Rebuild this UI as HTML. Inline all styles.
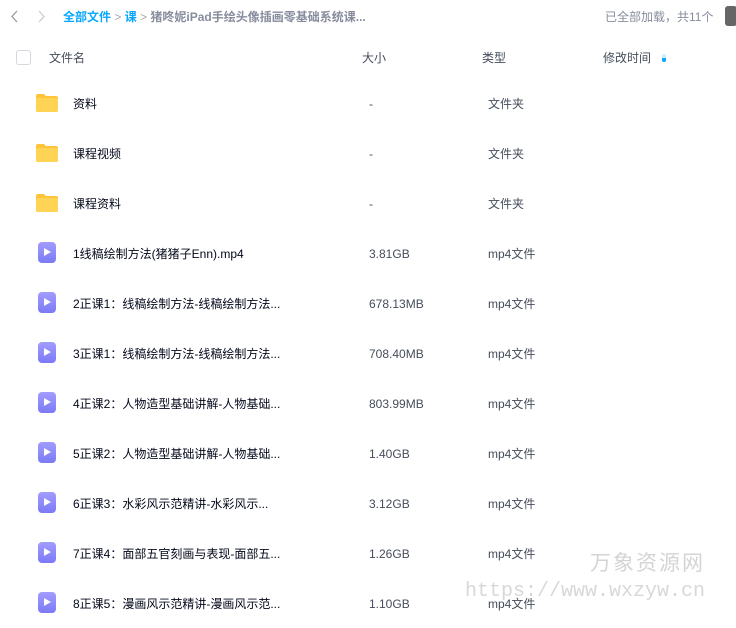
<!DOCTYPE html>
<html><head><meta charset="utf-8"><style>
body{margin:0;width:736px;height:624px;overflow:hidden;background:#fff;font-family:"Liberation Sans","Noto Sans CJK SC",sans-serif;font-size:12px;line-height:16px;color:#03081a;position:relative}
.a{position:absolute;white-space:nowrap}
.g{color:#878c9c}
.row{position:absolute;left:0;width:736px;height:50px}
.row .n{position:absolute;left:73px;top:18px;line-height:16px}
.row .s{position:absolute;left:369px;top:18px;color:#454d5a;line-height:16px}
.row .t{position:absolute;left:488px;top:18px;color:#454d5a;line-height:16px}
.fold{position:absolute;left:35px;top:15px;width:24px;height:20px}
.vid{position:absolute;left:38px;top:14px;width:18px;height:21px;border-radius:4px;background:linear-gradient(#a29cff,#7b7af5)}
.vid:after{content:"";position:absolute;left:6px;top:6px;border-left:7px solid #fff;border-top:4.5px solid transparent;border-bottom:4.5px solid transparent}
</style></head><body>
<svg class="a" style="left:10px;top:10px" width="8" height="13" viewBox="0 0 8 13"><path d="M7 1L2 6.5 7 12" fill="none" stroke="#999" stroke-width="1.3"/></svg>
<svg class="a" style="left:38px;top:10px" width="8" height="13" viewBox="0 0 8 13"><path d="M1 1l5 5.5L1 12" fill="none" stroke="#ccc" stroke-width="1.3"/></svg>
<div class="a" style="left:63px;top:9px;font-weight:bold;color:#06a7ff">全部文件 <span style="color:#aaa;font-weight:normal">&gt;</span> 课 <span style="color:#aaa;font-weight:normal">&gt;</span> <span style="color:#878c9c">猪咚妮iPad手绘头像插画零基础系统课...</span></div>
<div class="a g" style="left:605px;top:9px">已全部加载，共11个</div>
<div class="a" style="left:725px;top:6px;width:12px;height:20px;background:#666;border-radius:3px"></div>
<div class="a" style="left:16px;top:50px;width:13px;height:13px;border:1px solid #d4d7de;border-radius:3px"></div>
<div class="a" style="left:49px;top:50px;color:#454d5a">文件名</div>
<div class="a" style="left:362px;top:50px;color:#454d5a">大小</div>
<div class="a" style="left:482px;top:50px;color:#454d5a">类型</div>
<div class="a" style="left:603px;top:50px;color:#454d5a">修改时间</div>
<div class="a" style="left:662px;top:54px;width:4px;height:8px;background:linear-gradient(#cfe9ff 50%,#06a7ff 50%);border-radius:2px"></div>

<div class="row" style="top:78px"><svg class="fold" viewBox="0 0 24 20"><path d="M1 3a2 2 0 0 1 2-2h6l2 2h10a2 2 0 0 1 2 2v12a2 2 0 0 1-2 2H3a2 2 0 0 1-2-2z" fill="#ffc43b"/><rect x="1" y="5" width="22" height="14" rx="2" fill="#ffd354"/></svg><span class="n">资料</span><span class="s">-</span><span class="t">文件夹</span></div>
<div class="row" style="top:128px"><svg class="fold" viewBox="0 0 24 20"><path d="M1 3a2 2 0 0 1 2-2h6l2 2h10a2 2 0 0 1 2 2v12a2 2 0 0 1-2 2H3a2 2 0 0 1-2-2z" fill="#ffc43b"/><rect x="1" y="5" width="22" height="14" rx="2" fill="#ffd354"/></svg><span class="n">课程视频</span><span class="s">-</span><span class="t">文件夹</span></div>
<div class="row" style="top:178px"><svg class="fold" viewBox="0 0 24 20"><path d="M1 3a2 2 0 0 1 2-2h6l2 2h10a2 2 0 0 1 2 2v12a2 2 0 0 1-2 2H3a2 2 0 0 1-2-2z" fill="#ffc43b"/><rect x="1" y="5" width="22" height="14" rx="2" fill="#ffd354"/></svg><span class="n">课程资料</span><span class="s">-</span><span class="t">文件夹</span></div>
<div class="row" style="top:228px"><div class="vid"></div><span class="n">1线稿绘制方法(猪猪子Enn).mp4</span><span class="s">3.81GB</span><span class="t">mp4文件</span></div>
<div class="row" style="top:278px"><div class="vid"></div><span class="n">2正课1：线稿绘制方法-线稿绘制方法...</span><span class="s">678.13MB</span><span class="t">mp4文件</span></div>
<div class="row" style="top:328px"><div class="vid"></div><span class="n">3正课1：线稿绘制方法-线稿绘制方法...</span><span class="s">708.40MB</span><span class="t">mp4文件</span></div>
<div class="row" style="top:378px"><div class="vid"></div><span class="n">4正课2：人物造型基础讲解-人物基础...</span><span class="s">803.99MB</span><span class="t">mp4文件</span></div>
<div class="row" style="top:428px"><div class="vid"></div><span class="n">5正课2：人物造型基础讲解-人物基础...</span><span class="s">1.40GB</span><span class="t">mp4文件</span></div>
<div class="row" style="top:478px"><div class="vid"></div><span class="n">6正课3：水彩风示范精讲-水彩风示...</span><span class="s">3.12GB</span><span class="t">mp4文件</span></div>
<div class="row" style="top:528px"><div class="vid"></div><span class="n">7正课4：面部五官刻画与表现-面部五...</span><span class="s">1.26GB</span><span class="t">mp4文件</span></div>
<div class="row" style="top:578px"><div class="vid"></div><span class="n">8正课5：漫画风示范精讲-漫画风示范...</span><span class="s">1.10GB</span><span class="t">mp4文件</span></div>

<div class="a" style="left:590px;top:550px;font-size:21px;line-height:28px;color:#d4d4d4;letter-spacing:2px">万象资源网</div>
<div class="a" style="left:465px;top:578px;font-size:20px;line-height:28px;color:#d8d8d8;font-family:'Liberation Mono',monospace">https://www.wxzyw.cn</div>
</body></html>
